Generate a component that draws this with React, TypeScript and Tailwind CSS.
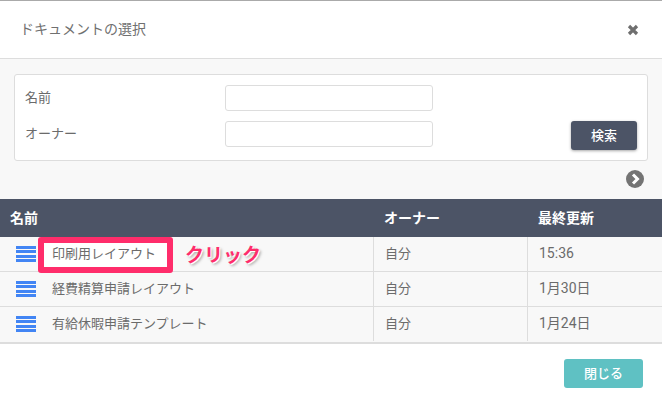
const font = { fontFamily: '"Noto Sans CJK JP", "Liberation Sans", sans-serif' };

function ListIcon() {
  return (
    <div className="flex h-[16px] w-5 flex-col justify-between">
      <div className="h-[3px] bg-[#4285f4]" />
      <div className="h-[3px] bg-[#4285f4]" />
      <div className="h-[3px] bg-[#4285f4]" />
      <div className="h-[3px] bg-[#4285f4]" />
    </div>
  );
}

function Row({ name, time, highlight, last }: { name: string; time: string; highlight?: boolean; last?: boolean }) {
  return (
    <div className={`flex h-[35px] text-[13px] text-[#6b6b6b] ${last ? "pb-[1px]" : "border-b border-[#dddddd]"}`}>
      <div className="relative flex w-[374px] items-center border-r border-[#dddddd] pl-[16px]">
        <ListIcon />
        {highlight && (
          <>
            <div className="absolute left-[38px] top-0 h-[36px] w-[135px] rounded-[3px] border-[6px] border-[#ff2d6b] bg-white" />
            <span className="absolute left-[185px] top-[3px] text-[19px] font-bold text-[#ff2d6b] [text-shadow:1px_1px_0_#ffffff,2px_2px_3px_rgba(0,0,0,0.35)]">クリック</span>
          </>
        )}
        <span className="relative mb-[2px] ml-4">{name}</span>
      </div>
      <div className="flex w-[154px] items-center border-r border-[#dddddd] pl-[11px]"><span className="mb-[2px]">自分</span></div>
      <div className="flex flex-1 items-center pl-[11px] text-[14px]" style={{ fontFamily: 'Roboto, "Noto Sans CJK JP", sans-serif' }}><span className="mb-[2px]">{time}</span></div>
    </div>
  );
}

export default function App() {
  return (
    <div className="h-[400px] w-[662px] overflow-hidden border-t border-[#aaaaaa] bg-white" style={font}>
      <div className="flex h-[58px] items-center justify-between border-b border-[#dddddd] pl-[20px] pr-[23px]">
        <span className="mb-[2px] text-[14px] text-[#707070]">ドキュメントの選択</span>
        <svg width="12" height="12" viewBox="0 0 12 12" className="mt-[1px]">
          <path d="M2 2 L10 10 M10 2 L2 10" stroke="#6f6f6f" strokeWidth="3.2" />
        </svg>
      </div>
      <div className="h-[140px] bg-[#f8f8f8] px-[14px] pt-[15px]">
        <div className="relative h-[87px] w-[634px] rounded-[3px] border border-[#dddddd] bg-white pl-[10px] pt-[10px] text-[13px] text-[#6b6b6b]">
          <div className="flex h-[26px] items-center">
            <span className="mb-[2px] w-[200px]">名前</span>
            <div className="h-[26px] w-[208px] rounded-[3px] border border-[#dddddd] bg-white" />
          </div>
          <div className="mt-[10px] flex h-[26px] items-center">
            <span className="mb-[2px] w-[200px]">オーナー</span>
            <div className="h-[26px] w-[208px] rounded-[3px] border border-[#dddddd] bg-white" />
          </div>
          <button className="absolute left-[556px] top-[46px] h-[29px] w-[66px] rounded-[3px] bg-[#4c5466] pb-[2px] text-[13px] font-medium text-white shadow-[0_1px_3px_rgba(0,0,0,0.35)]">検索</button>
        </div>
        <div className="mt-[9px] flex justify-end pr-[4px]">
          <svg width="18" height="18" viewBox="0 0 18 18">
            <circle cx="9" cy="9" r="9" fill="#747474" />
            <path d="M7 4.5 L11.5 9 L7 13.5" fill="none" stroke="#fff" strokeWidth="3" />
          </svg>
        </div>
      </div>
      <div className="flex h-[38px] items-center bg-[#4c5466] pb-[1px] text-[14px] font-bold text-white">
        <div className="w-[374px] pl-[10px]">名前</div>
        <div className="w-[154px] pl-[10px]">オーナー</div>
        <div className="pl-[10px]">最終更新</div>
      </div>
      <div className="border-b-2 border-[#dddddd] bg-[#f8f8f8]">
        <Row name="印刷用レイアウト" time="15:36" highlight />
        <Row name="経費精算申請レイアウト" time="1月30日" />
        <Row name="有給休暇申請テンプレート" time="1月24日" last />
      </div>
      <div className="flex justify-end pr-[19px] pt-[15px]">
        <button className="h-[29px] w-[79px] rounded-[3px] bg-[#5fc1c3] pb-[2px] text-[13px] font-medium text-white">閉じる</button>
      </div>
    </div>
  );
}
